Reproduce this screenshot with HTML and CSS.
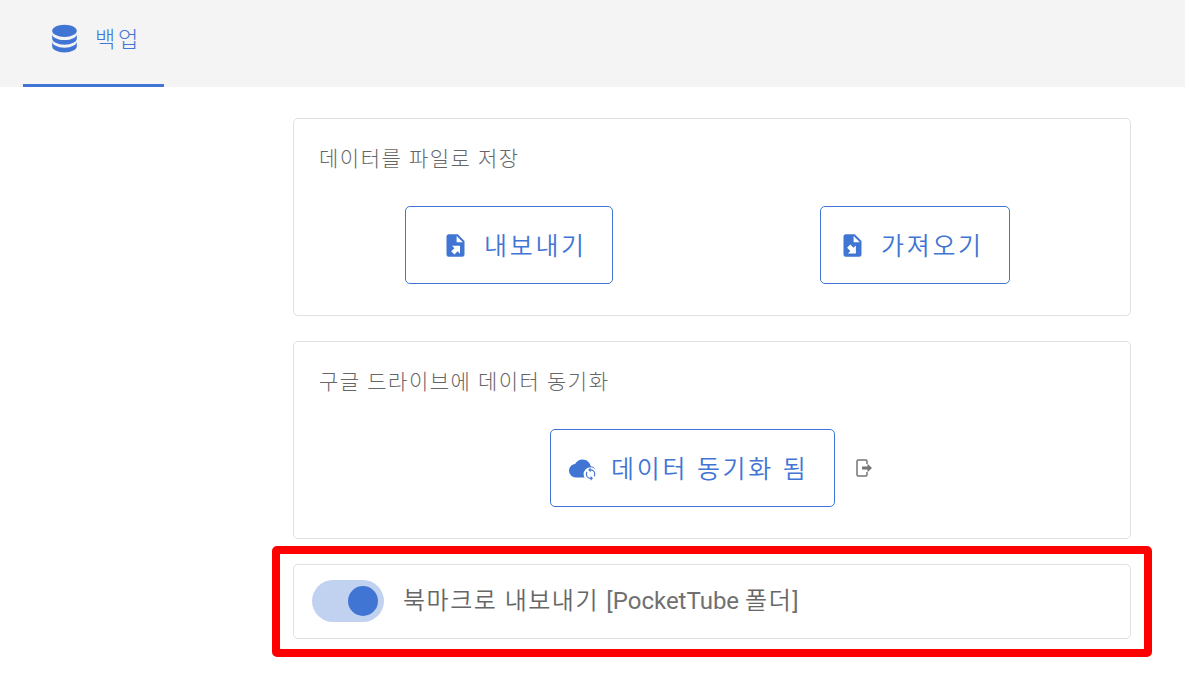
FILE: index.html
```html
<!DOCTYPE html>
<html lang="ko">
<head>
  <meta charset="UTF-8">
  <meta name="viewport" content="width=device-width, initial-scale=1.0">
  <title>백업</title>
  <link rel="stylesheet" href="styles.css">
</head>
<body>

<!-- Tabs -->
<div class="tabs">
  <div class="tab active">
    <svg class="tab-icon" viewBox="0 0 24 24"><path d="M12,3C7.58,3 4,4.79 4,7C4,9.21 7.58,11 12,11C16.42,11 20,9.21 20,7C20,4.79 16.42,3 12,3M4,9V12C4,14.21 7.58,16 12,16C16.42,16 20,14.21 20,12V9C20,11.21 16.42,13 12,13C7.58,13 4,11.21 4,9M4,14V17C4,19.21 7.58,21 12,21C16.42,21 20,19.21 20,17V14C20,16.21 16.42,18 12,18C7.58,18 4,16.21 4,14Z"/></svg>
    <span class="tab-label">백업</span>
  </div>
</div>

<div class="content">

  <!-- File backup -->
  <div class="card">
    <div class="card-title">데이터를 파일로 저장</div>
    <div class="actions file-actions">
      <button class="btn btn-export">
        <svg class="btn-icon" viewBox="0 0 24 24"><path d="M6,2C4.89,2 4,2.9 4,4V20A2,2 0 0,0 6,22H18A2,2 0 0,0 20,20V8L14,2M13,3.5L18.5,9H13M8.93,12.22H16V19.29L13.88,17.17L11.05,20L8.22,17.17L11.05,14.35"/></svg>
        <span class="btn-label">내보내기</span>
      </button>
      <button class="btn btn-import">
        <svg class="btn-icon" viewBox="0 0 24 24"><path d="M6,2C4.89,2 4,2.9 4,4V20A2,2 0 0,0 6,22H18A2,2 0 0,0 20,20V8L14,2M13,3.5L18.5,9H13M10.05,11.22L12.88,14.05L15,11.93V19H7.93L10.05,16.88L7.22,14.05"/></svg>
        <span class="btn-label">가져오기</span>
      </button>
    </div>
  </div>

  <!-- Google Drive sync -->
  <div class="card">
    <div class="card-title">구글 드라이브에 데이터 동기화</div>
    <div class="actions drive-actions">
      <button class="btn btn-sync">
        <svg class="btn-icon" viewBox="0 0 24 24">
          <path d="M19.35,10.03C18.67,6.59 15.64,4 12,4C9.11,4 6.6,5.64 5.35,8.03C2.34,8.36 0,10.9 0,14A6,6 0 0,0 6,20H19A5,5 0 0,0 24,15C24,12.36 21.95,10.22 19.35,10.03Z"/>
          <circle class="cutout" cx="19.2" cy="17" r="6.2"/>
          <path transform="translate(12.84 10.64) scale(.53)" d="M12,18A6,6 0 0,1 6,12C6,11 6.25,10.03 6.7,9.2L5.24,7.74C4.46,8.97 4,10.43 4,12A8,8 0 0,0 12,20V23L16,19L12,15M12,4V1L8,5L12,9V6A6,6 0 0,1 18,12C18,13 17.75,13.97 17.3,14.8L18.76,16.26C19.54,15.03 20,13.57 20,12A8,8 0 0,0 12,4Z"/>
        </svg>
        <span class="btn-label">데이터 동기화 됨</span>
      </button>
      <svg class="logout" viewBox="0 0 18 18"><path class="door" d="M11,5V2.2Q11,1 9.8,1H2.2Q1,1 1,2.2V15.8Q1,17 2.2,17H9.8Q11,17 11,15.8V13"/><path d="M6,7.5H11.5V4.8L16,9L11.5,13.2V10.5H6Z"/></svg>
    </div>
  </div>

  <!-- Bookmark export -->
  <div class="highlight">
    <div class="card toggle-card">
      <div class="switch"><div class="thumb"></div></div>
      <span class="toggle-label">북마크로 내보내기 <span class="latin">[PocketTube </span>폴더<span class="latin">]</span></span>
    </div>
  </div>

</div>

</body>
</html>
```
FILE: styles.css
```css
* {
  box-sizing: border-box;
}
body {
  margin: 0;
  font-family: Roboto, "Noto Sans CJK KR", sans-serif;
  font-weight: 350;
  background: #fff;
  color: #666;
}
svg {
  flex: none;
  fill: currentColor;
}
.tabs {
  display: flex;
  height: 87px;
  padding-left: 23px;
  background: #f4f4f4;
}
.tab {
  display: flex;
  align-items: center;
  width: 141px;
  padding: 0 0 7px 23px;
  color: #4175d4;
}
.tab.active {
  border-bottom: 3px solid #4175d4;
}
.tab-icon {
  width: 37px;
  height: 37px;
}
.tab-label {
  margin-left: 12px;
  padding-bottom: 4px;
  font-size: 22px;
  font-weight: 300;
  letter-spacing: 2.7px;
  white-space: nowrap;
}
.content {
  display: flex;
  flex-direction: column;
  width: 838px;
  margin: 31px 0 0 293px;
}
.card {
  height: 198px;
  border: 1px solid #e0e0e0;
  border-radius: 5px;
}
.card + .card {
  margin-top: 25px;
}
.card-title {
  height: 87px;
  padding: 25px 0 0 25px;
  font-size: 21px;
  font-weight: 300;
  line-height: 30px;
  letter-spacing: 1.5px;
}
.actions {
  display: flex;
  align-items: center;
}
.file-actions {
  gap: 207px;
  padding-left: 111px;
}
.drive-actions {
  gap: 21px;
  padding-left: 256px;
}
.btn {
  display: flex;
  align-items: center;
  gap: 15px;
  height: 78px;
  padding: 0 0 0 18px;
  border: 1px solid #4175d4;
  border-radius: 5px;
  background: #fff;
  color: #4175d4;
  font: inherit;
  font-size: 25px;
  letter-spacing: 2.7px;
  white-space: nowrap;
}
.btn-icon {
  width: 27px;
  height: 27px;
}
.btn-label {
  padding-bottom: 3px;
}
.btn-export {
  width: 208px;
  padding-left: 36px;
}
.btn-import {
  width: 190px;
}
.btn-sync {
  width: 285px;
}
.cutout {
  fill: #fff;
}
.logout {
  width: 18px;
  height: 18px;
  color: #757575;
}
.door {
  fill: none;
  stroke: currentColor;
  stroke-width: 1.5;
}
.highlight {
  width: 880px;
  height: 111px;
  margin: 7px 0 0 -21px;
  padding: 10px 13px;
  border: 8px solid #f00;
  border-radius: 5px;
}
.toggle-card {
  display: flex;
  align-items: center;
  height: 75px;
  padding: 0 0 2px 18px;
}
.switch {
  display: flex;
  align-items: center;
  justify-content: flex-end;
  width: 72px;
  height: 42px;
  padding-right: 6px;
  border-radius: 21px;
  background: #c1d2f1;
}
.thumb {
  width: 30px;
  height: 30px;
  border-radius: 50%;
  background: #4175d4;
}
.toggle-label {
  margin-left: 19px;
  padding-bottom: 4px;
  font-size: 24px;
  letter-spacing: 1.5px;
}
.latin {
  color: #707070;
  font-weight: 400;
  letter-spacing: 0;
}
```
